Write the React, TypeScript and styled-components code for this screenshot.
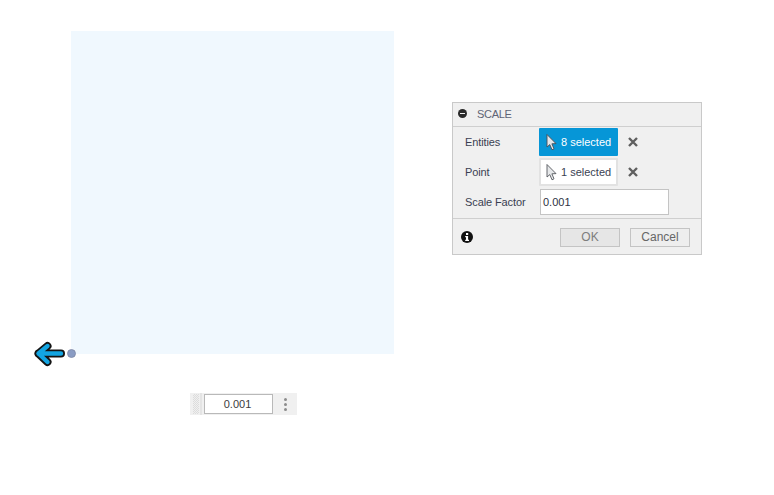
import React from "react";
import styled, { createGlobalStyle } from "styled-components";

const Global = createGlobalStyle`
  html, body { margin: 0; padding: 0; background: #fff; }
  body { font-family: "Liberation Sans", Arial, sans-serif; }
`;

const Canvas = styled.div`
  position: relative;
  width: 774px;
  height: 495px;
  overflow: hidden;
  background: #fff;
`;

const Sketch = styled.div`
  position: absolute;
  left: 71px;
  top: 31px;
  width: 323px;
  height: 323px;
  background: #f0f8fe;
`;

const ArrowWrap = styled.svg`
  position: absolute;
  left: 30px;
  top: 338px;
`;

const Manipulator = styled.div`
  position: absolute;
  left: 190px;
  top: 393px;
  width: 107px;
  height: 22px;
  background: #f0f0f0;
  display: flex;
  align-items: center;
`;

const Grip = styled.div`
  width: 6px;
  height: 20px;
  margin: 0 1px 0 3px;
  background: repeating-conic-gradient(#dcdcdc 0% 25%, #f0f0f0 0% 50%) 0 0 / 2px 2px;
`;

const GripBar = styled.div`
  width: 2px;
  height: 22px;
  background: #e4e4e4;
`;

const ManipulatorInput = styled.div`
  box-sizing: border-box;
  width: 69px;
  height: 20px;
  margin-left: 2px;
  padding-right: 2px;
  background: #fff;
  border: 1px solid #b9b9b9;
  font-size: 11px;
  line-height: 18px;
  text-align: center;
  color: #3c3c3c;
`;

const Kebab = styled.div`
  margin-left: 11px;
  display: flex;
  flex-direction: column;
  gap: 2px;
`;

const KebabDot = styled.span`
  width: 3px;
  height: 3px;
  border-radius: 50%;
  background: #8c8c8c;
`;

const Panel = styled.div`
  position: absolute;
  left: 452px;
  top: 102px;
  box-sizing: border-box;
  width: 250px;
  height: 153px;
  background: #f0f0f0;
  border: 1px solid #c9c9c9;
  color: #3a3f52;
  font-size: 11px;
  display: flex;
  flex-direction: column;
`;

const Header = styled.div`
  box-sizing: border-box;
  height: 24px;
  padding: 0 0 2px 5px;
  border-bottom: 1px solid #cfcfcf;
  display: flex;
  align-items: center;
  gap: 10px;
  color: #5f6475;
`;

const CollapseDot = styled.span`
  width: 9px;
  height: 9px;
  border-radius: 50%;
  background: #2a2a2a;
  display: flex;
  align-items: center;
  justify-content: center;
  &::after {
    content: "";
    width: 5px;
    height: 1.5px;
    background: #f0f0f0;
  }
`;

const Title = styled.span`
  letter-spacing: -0.3px;
`;

const Body = styled.div`
  flex: 1;
  padding-top: 1px;
  display: flex;
  flex-direction: column;
  gap: 2px;
  padding-left: 12px;
`;

const Row = styled.div`
  display: flex;
  align-items: center;
  height: 28px;
`;

const Label = styled.span`
  width: 74px;
  letter-spacing: -0.1px;
`;

const SelectButton = styled.div<{ $active?: boolean }>`
  box-sizing: border-box;
  width: 79px;
  height: 28px;
  border: 2px solid ${(p) => (p.$active ? "#0696d7" : "#e2e2e2")};
  border-radius: 1px;
  background: ${(p) => (p.$active ? "#0696d7" : "#fff")};
  color: ${(p) => (p.$active ? "#fff" : "#3a3f52")};
  display: flex;
  align-items: center;
  padding-left: 5px;
  gap: 4px;
  white-space: nowrap;
`;

const Clear = styled.svg`
  margin-left: 10px;
`;

const FactorInput = styled.div`
  box-sizing: border-box;
  width: 129px;
  height: 26px;
  margin-left: 1px;
  background: #fff;
  border: 1px solid #c4c4c4;
  line-height: 24px;
  padding-left: 2px;
  color: #2e3242;
`;

const Footer = styled.div`
  height: 36px;
  box-sizing: border-box;
  border-top: 1px solid #cfcfcf;
  display: flex;
  align-items: center;
  padding: 0 11px 0 8px;
`;

const Spacer = styled.div`
  flex: 1;
`;

const DialogButton = styled.div<{ $disabled?: boolean }>`
  box-sizing: border-box;
  width: 60px;
  height: 19px;
  margin: 2px 0 0 10px;
  border: 1px solid #c4c4c4;
  background: ${(p) => (p.$disabled ? "#e6e6e6" : "#eeeeee")};
  color: ${(p) => (p.$disabled ? "#7d7d7d" : "#666")};
  font-size: 12px;
  line-height: 17px;
  text-align: center;
`;

const Cursor = ({ light }: { light?: boolean }) => (
  <svg width="11" height="17" viewBox="0 0 11 17">
    <path
      d="M1 0.5 L1 13 L3.8 10.6 L6 15.8 L8 14.8 L5.9 9.8 L10 9.6 Z"
      fill={light ? "#e6e8ea" : "#e4e6ea"}
      stroke={light ? "#55585e" : "#4a4d55"}
      strokeWidth="0.9"
      strokeLinejoin="round"
    />
  </svg>
);

const X = () => (
  <Clear width="10" height="10" viewBox="0 0 10 10">
    <path d="M1 1 L9 9 M9 1 L1 9" stroke="#5f5f5f" strokeWidth="2.4" />
  </Clear>
);

export default function App() {
  return (
    <Canvas>
      <Global />
      <Sketch />
      <ArrowWrap width="50" height="32" viewBox="0 0 50 32">
        <circle cx="41" cy="15.5" r="5" fill="#fff" />
        <path
          d="M31 15.5 L8.5 15.5 M8.5 15.5 L17.5 8 M8.5 15.5 L17.5 24"
          fill="none"
          stroke="#141414"
          strokeWidth="8"
          strokeLinecap="round"
          strokeLinejoin="round"
        />
        <path
          d="M31 15.5 L8.5 15.5 M8.5 15.5 L17.5 8 M8.5 15.5 L17.5 24"
          fill="none"
          stroke="#12a5e2"
          strokeWidth="4.4"
          strokeLinecap="round"
          strokeLinejoin="round"
        />
        <circle cx="41.5" cy="15.5" r="4" fill="#8a9cc4" stroke="#7b86a4" strokeWidth="0.8" />
      </ArrowWrap>
      <Manipulator>
        <Grip />
        <GripBar />
        <ManipulatorInput>0.001</ManipulatorInput>
        <Kebab>
          <KebabDot />
          <KebabDot />
          <KebabDot />
        </Kebab>
      </Manipulator>
      <Panel>
        <Header>
          <CollapseDot />
          <Title>SCALE</Title>
        </Header>
        <Body>
          <Row>
            <Label>Entities</Label>
            <SelectButton $active>
              <Cursor />
              8 selected
            </SelectButton>
            <X />
          </Row>
          <Row>
            <Label>Point</Label>
            <SelectButton>
              <Cursor light />
              1 selected
            </SelectButton>
            <X />
          </Row>
          <Row>
            <Label>Scale Factor</Label>
            <FactorInput>0.001</FactorInput>
          </Row>
        </Body>
        <Footer>
          <svg width="12" height="12" viewBox="0 0 12 12">
            <circle cx="6" cy="6" r="6" fill="#111" />
            <rect x="5" y="2" width="2.2" height="2" fill="#fff" />
            <path d="M4.2 5 H7.1 V8.8 H8 V10 H4.2 V8.8 H5 V6.2 H4.2 Z" fill="#fff" />
          </svg>
          <Spacer />
          <DialogButton $disabled>OK</DialogButton>
          <DialogButton>Cancel</DialogButton>
        </Footer>
      </Panel>
    </Canvas>
  );
}
